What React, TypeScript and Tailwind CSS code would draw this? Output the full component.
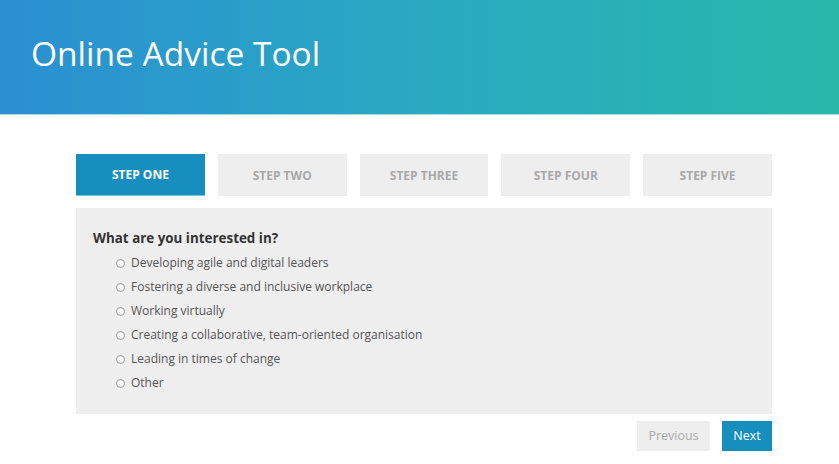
const steps = ['Step One', 'Step Two', 'Step Three', 'Step Four', 'Step Five'];

const options = [
  'Developing agile and digital leaders',
  'Fostering a diverse and inclusive workplace',
  'Working virtually',
  'Creating a collaborative, team-oriented organisation',
  'Leading in times of change',
  'Other',
];

export default function App() {
  return (
    <div className="min-h-[464px] bg-white font-['Open_Sans',sans-serif]">
      <header className="h-[115px] border-b border-[#a8dbe6] bg-gradient-to-r from-[#2b8fd2] via-[#2aa9c1] to-[#28b8aa] px-[31px] pt-[29px]">
        <h1 className="text-[33.5px] leading-[48px] text-white">Online Advice Tool</h1>
      </header>

      <main className="mx-[76px] mt-[39px] w-[696px]">
        <div className="flex gap-[13px]">
          {steps.map((s, i) => (
            <div
              key={s}
              className={
                i === 0
                  ? 'flex h-[42px] flex-1 items-center justify-center border-b border-[#7cc3e0] bg-[#168fbf] pt-[1px] text-[12px] font-bold uppercase text-white'
                  : 'flex h-[42px] flex-1 items-center justify-center bg-[#eeeeee] pt-[1px] text-[12px] font-bold uppercase text-[#a9a9a9]'
              }
            >
              {s}
            </div>
          ))}
        </div>

        <section className="mt-[12px] h-[206px] bg-[#eeeeee] px-[17px] pt-[20px]">
          <h2 className="text-[13.4px] font-bold leading-[20px] text-[#333]">What are you interested in?</h2>
          <ul className="mt-[3px] pl-[23px]">
            {options.map((o) => (
              <li key={o} className="flex h-[24px] items-center gap-[6px] text-[12px] text-[#555]">
                <span className="h-[9px] w-[9px] rounded-full border border-[#999] bg-white" />
                {o}
              </li>
            ))}
          </ul>
        </section>

        <div className="mt-[7px] flex justify-end gap-[12px]">
          <button className="h-[30px] w-[73px] bg-[#eeeeee] pt-[1px] text-[12.5px] text-[#aaa]">Previous</button>
          <button className="h-[30px] w-[50px] bg-[#168fbf] pt-[1px] text-[12.5px] text-white">Next</button>
        </div>
      </main>
    </div>
  );
}
